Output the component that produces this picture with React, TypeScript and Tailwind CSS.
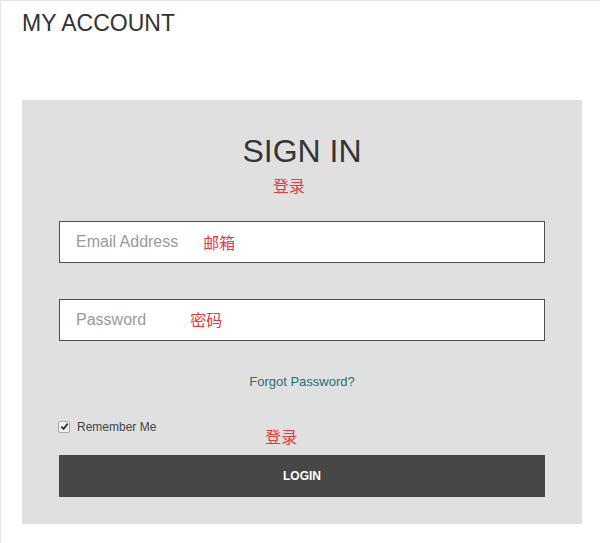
export default function App() {
  return (
    <div
      className="min-h-[543px] w-[600px] border-t border-l border-[#e6e6e6] bg-white pt-[11px] pl-[21px]"
      style={{ fontFamily: '"Liberation Sans", Arial, "Noto Sans CJK SC", sans-serif' }}
    >
      <h1 className="text-[23px] leading-[23px] text-[#333333]">MY ACCOUNT</h1>

      <div className="mt-[65px] w-[560px] bg-[#e0e0e0] px-[37px] pt-[35px] pb-[27px]">
        <h2 className="text-center text-[32px] leading-[32px] text-[#363636]">SIGN IN</h2>
        <div className="mt-[10px] pl-[214px] text-[16px] leading-[16px] text-[#e23b3f]" style={{ fontFamily: '"Noto Sans CJK SC", sans-serif' }}>
          登录
        </div>

        <div className="mt-[28px] flex h-[42px] items-center border border-[#4d4d4d] bg-white pl-[16px] text-[16px] leading-[16px] text-[#999999]">
          <span>Email Address</span>
          <span className="ml-[25px] text-[#e23b3f]" style={{ fontFamily: '"Noto Sans CJK SC", sans-serif' }}>邮箱</span>
        </div>

        <div className="mt-[36px] flex h-[42px] items-center border border-[#4d4d4d] bg-white pl-[16px] text-[16px] leading-[16px] text-[#999999]">
          <span>Password</span>
          <span className="ml-[44px] -mt-[2px] text-[#e23b3f]" style={{ fontFamily: '"Noto Sans CJK SC", sans-serif' }}>密码</span>
        </div>

        <div className="mt-[34px] text-center text-[13px] leading-[13px] text-[#23736f]">
          Forgot Password?
        </div>

        <div className="mt-[33px] flex items-start">
          <div className="flex items-center">
            <span className="-ml-[1px] mt-[-1px] flex h-[12px] w-[12px] items-center justify-center rounded-[2px] border border-[#a9a9a9] bg-[#f2f2f2]">
              <svg width="9" height="9" viewBox="0 0 10 10">
                <path d="M1.5 5.2 L4 7.6 L8.6 1.8" fill="none" stroke="#333" strokeWidth="2" />
              </svg>
            </span>
            <span className="ml-[7px] text-[12px] leading-[12px] text-[#444444]">Remember Me</span>
          </div>
          <span
            className="ml-[109px] mt-[7px] text-[16px] leading-[16px] text-[#e23b3f]"
            style={{ fontFamily: '"Noto Sans CJK SC", sans-serif' }}
          >
            登录
          </span>
        </div>

        <button className="mt-[11px] flex h-[42px] w-full items-center justify-center bg-[#474747] text-[12px] font-bold text-white">
          LOGIN
        </button>
      </div>
    </div>
  );
}
